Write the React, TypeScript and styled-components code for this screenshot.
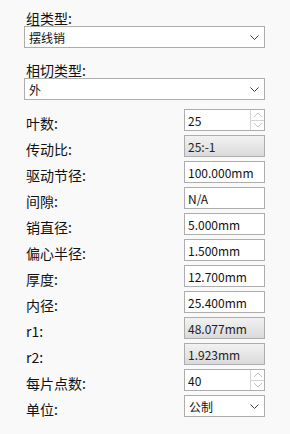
import { Fragment } from "react";
import styled, { createGlobalStyle } from "styled-components";

const GlobalStyle = createGlobalStyle`
  html, body {
    margin: 0;
    padding: 0;
    background: #f9f9f9;
  }
  body {
    font-family: "Noto Sans CJK SC", "Noto Sans", sans-serif;
    color: #111;
  }
`;

const Panel = styled.div`
  width: 290px;
  height: 434px;
  box-sizing: border-box;
  padding: 10px 25px 0 24px;
  background: #f9f9f9;
`;

const ComboLabel = styled.div<{ $first?: boolean }>`
  font-size: 14px;
  line-height: 16px;
  height: 16px;
  padding-left: 2px;
  margin-top: ${props => (props.$first ? "0" : "14px")};
`;

const Combo = styled.div<{ $small?: boolean }>`
  height: 22px;
  box-sizing: border-box;
  border: 1px solid #adadad;
  background: #fff;
  display: flex;
  align-items: center;
  justify-content: space-between;
  padding: 0 5px 0 4px;
  font-size: 12px;
  width: ${props => (props.$small ? "81px" : "auto")};
`;

const Chevron = () => (
  <svg width="9" height="5" viewBox="0 0 9 5">
    <path d="M0.5 0.5 L4.5 4.5 L8.5 0.5" fill="none" stroke="#3c3c3c" strokeWidth="1" />
  </svg>
);

const Rows = styled.div`
  display: grid;
  grid-template-columns: 1fr 81px;
  row-gap: 4px;
  margin-top: 9px;
`;

const RowLabel = styled.div`
  font-size: 14px;
  line-height: 22px;
  height: 22px;
  padding: 3px 0 0 2px;
  box-sizing: border-box;
`;

const Field = styled.div<{ $readonly?: boolean }>`
  height: 22px;
  box-sizing: border-box;
  border: 1px solid #adadad;
  background: ${props =>
    props.$readonly ? "linear-gradient(#f2f2f2, #dadada)" : "#fff"};
  color: ${props => (props.$readonly ? "#222" : "#111")};
  display: flex;
  align-items: center;
  padding-left: 3px;
  font-size: 12px;
  overflow: hidden;
  white-space: nowrap;
`;

const SpinField = styled(Field)`
  padding-left: 0;
`;

const SpinText = styled.div`
  flex: 1;
  padding-left: 3px;
`;

const SpinButtons = styled.div`
  width: 13px;
  height: 100%;
  border-left: 1px solid #d4d4d4;
  display: flex;
  flex-direction: column;
`;

const SpinButton = styled.div`
  flex: 1;
  display: flex;
  align-items: center;
  justify-content: center;
  & + & {
    border-top: 1px solid #d4d4d4;
  }
`;

const Arrow = ({ up }: { up?: boolean }) => (
  <svg width="10" height="6" viewBox="0 0 10 6">
    <path
      d={up ? "M1 5 L5 1 L9 5" : "M1 1 L5 5 L9 1"}
      fill="none"
      stroke="#c4c4c4"
      strokeWidth="1"
    />
  </svg>
);

type Row = {
  label: string;
  kind: "text" | "readonly" | "spin" | "combo";
  value: string;
};

const rows: Row[] = [
  { label: "叶数:", kind: "spin", value: "25" },
  { label: "传动比:", kind: "readonly", value: "25:-1" },
  { label: "驱动节径:", kind: "text", value: "100.000mm" },
  { label: "间隙:", kind: "text", value: "N/A" },
  { label: "销直径:", kind: "text", value: "5.000mm" },
  { label: "偏心半径:", kind: "text", value: "1.500mm" },
  { label: "厚度:", kind: "text", value: "12.700mm" },
  { label: "内径:", kind: "text", value: "25.400mm" },
  { label: "r1:", kind: "readonly", value: "48.077mm" },
  { label: "r2:", kind: "readonly", value: "1.923mm" },
  { label: "每片点数:", kind: "spin", value: "40" },
  { label: "单位:", kind: "combo", value: "公制" },
];

function renderField(row: Row) {
  if (row.kind === "spin") {
    return (
      <SpinField>
        <SpinText>{row.value}</SpinText>
        <SpinButtons>
          <SpinButton>
            <Arrow up />
          </SpinButton>
          <SpinButton>
            <Arrow />
          </SpinButton>
        </SpinButtons>
      </SpinField>
    );
  }
  if (row.kind === "combo") {
    return (
      <Combo $small>
        {row.value}
        <Chevron />
      </Combo>
    );
  }
  return <Field $readonly={row.kind === "readonly"}>{row.value}</Field>;
}

export default function App() {
  return (
    <Panel>
      <GlobalStyle />
      <ComboLabel $first>组类型:</ComboLabel>
      <Combo>
        摆线销
        <Chevron />
      </Combo>
      <ComboLabel>相切类型:</ComboLabel>
      <Combo>
        外
        <Chevron />
      </Combo>
      <Rows>
        {rows.map(row => (
          <Fragment key={row.label}>
            <RowLabel>{row.label}</RowLabel>
            {renderField(row)}
          </Fragment>
        ))}
      </Rows>
    </Panel>
  );
}
